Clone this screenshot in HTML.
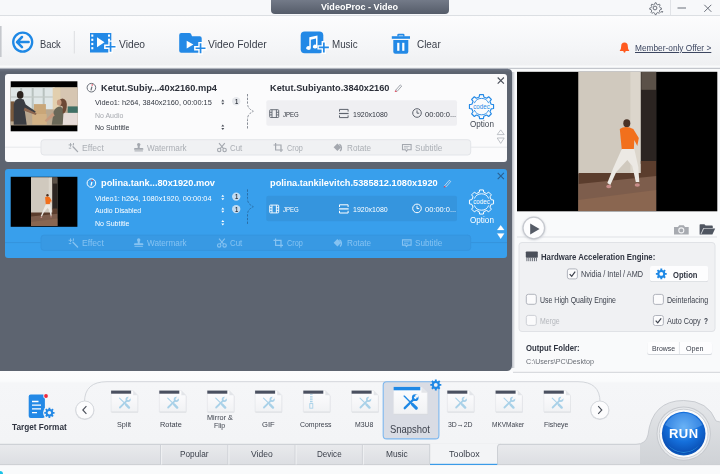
<!DOCTYPE html>
<html><head><meta charset="utf-8">
<style>
*{box-sizing:border-box;margin:0;padding:0}
html,body{width:720px;height:474px;overflow:hidden}
body{font-family:"Liberation Sans",sans-serif;background:#f4f5f7;position:relative;color:#333}
.a{position:absolute}
.t{position:absolute;white-space:nowrap;transform-origin:0 0;line-height:1}
svg{position:absolute;overflow:visible}
#titlebar{left:0;top:0;width:720px;height:16px;background:#f7f8fa;border-bottom:1px solid #dcdfe3}
#titletab{left:271px;top:0;width:178px;height:13.5px;background:linear-gradient(#737a88,#555c69);border-radius:0 0 4px 4px}
#toolbar{left:0;top:16px;width:720px;height:53px;background:linear-gradient(#fcfcfd 0px,#f5f6f8 30px,#eff0f2 49px,#f9fafb 50px,#f9fafb 51.3px,#cfd2d7 52px,#8e94a0 53px)}
#leftpanel{left:0;top:68.8px;width:512px;height:302.2px;background:linear-gradient(#6d7483 0px,#5d6470 3px);border-radius:0 4px 5px 0}
.card{left:5px;width:502px;border-radius:3px}
#card1{top:73.6px;height:88.6px;background:#fbfbfc}
#card2{top:169.2px;height:88.4px;background:#389fec}
#rightpanel{left:508px;top:67.5px;width:212px;height:304.5px;background:#f9fafb;border-top:1.3px solid #c3c6cc}
#bottom{left:0;top:371px;width:720px;height:103px;background:linear-gradient(#fcfcfd 0px,#fafbfc 10px,#f5f6f8 12px,#f3f4f6 70px)}
</style></head><body>
<div id="titlebar" class="a"></div>
<div id="titletab" class="a"></div>
<div id="toolbar" class="a"></div>
<div id="rightpanel" class="a"></div>
<div id="leftpanel" class="a"></div>
<div id="card1" class="a card"></div>
<div id="card2" class="a card"></div>
<div id="bottom" class="a"></div>
<svg class="a" style="left:0;top:0" width="720" height="474" viewBox="0 0 720 474">
<defs>
<filter id="b1" x="-20%" y="-20%" width="140%" height="140%"><feGaussianBlur stdDeviation="0.6"/></filter>
<filter id="b2" x="-20%" y="-20%" width="140%" height="140%"><feGaussianBlur stdDeviation="1.2"/></filter>
<filter id="sh" x="-30%" y="-30%" width="160%" height="160%"><feGaussianBlur stdDeviation="1"/></filter>
<!-- dancer scene 78x139 -->
<symbol id="dancer" viewBox="0 0 78 139" preserveAspectRatio="none">
 <rect width="78" height="139" fill="#cdc5b9"/>
 <rect x="0" y="0" width="52" height="102" fill="#d0c9be"/>
 <rect x="52" y="0" width="10.5" height="102" fill="#dcd6cc"/>
 <rect x="62.5" y="0" width="15.5" height="92" fill="#2b2421"/>
 <rect x="63" y="0" width="15" height="18" fill="#5b5148"/>
 <path d="M0 101 L62.5 101 L62.5 89 L78 89 L78 139 L0 139Z" fill="#5b3d2d"/>
 <path d="M0 112 L78 104 L78 139 L0 139Z" fill="#7d5d4c"/>
 <path d="M0 128 L78 118 L78 139 L0 139Z" fill="#8a6650"/>
 <g filter="url(#b1)">
 <ellipse cx="48.5" cy="51.5" rx="3.5" ry="4" fill="#4a3226"/>
 <path d="M41.5 57 Q47 53 55 57 L60.5 66 L59 74 L56 68 L55.5 78 L43.5 78 Z" fill="#f2701f"/>
 <path d="M43.5 77 L56 77 L60 95 L61 110 L57.5 110 L54 94 L49 88 L38 100 L32 113 L29 111 L35 96 Z" fill="#ece9e4"/>
 <ellipse cx="30.5" cy="114.5" rx="2.6" ry="1.8" fill="#c98d8a"/>
 <ellipse cx="59" cy="113" rx="2.6" ry="1.8" fill="#c98d8a"/>
 </g>
</symbol>
</defs>

<!-- title bar icons -->
<g stroke="#6b707a" fill="none" stroke-width="1">
 <line x1="670.5" y1="0" x2="670.5" y2="15" stroke="#e1e3e7"/>
 <line x1="677.5" y1="8" x2="686" y2="8"/>
 <path d="M704.3 4.8 L711.3 11.8 M711.3 4.8 L704.3 11.8"/>
 <circle cx="655" cy="8" r="1.9"/>
 <path d="M655 2.8 l1.2 0 l.4 1.5 l1.3 .6 l1.4-.8 l.9 .9 l-.8 1.4 l.6 1.3 l1.5 .4 l0 1.2 l-1.5 .4 l-.6 1.3 l.8 1.4 l-.9 .9 l-1.4-.8 l-1.3 .6 l-.4 1.5 l-1.2 0 l-.4-1.5 l-1.3-.6 l-1.4 .8 l-.9-.9 l.8-1.4 l-.6-1.3 l-1.5-.4 l0-1.2 l1.5-.4 l.6-1.3 l-.8-1.4 l.9-.9 l1.4 .8 l1.3-.6 z" stroke-width="0.9"/>
</g>
<path d="M660.8 11.3 l2.6 0 l-1.3 1.6z" fill="#555a64"/>

<!-- toolbar -->
<rect x="0" y="26" width="1.6" height="31" fill="#c5c8cd"/>
<line x1="74.3" y1="31" x2="74.3" y2="53.5" stroke="#dcdee2" stroke-width="1"/>
<g id="back">
 <circle cx="22.7" cy="42.1" r="9.5" fill="none" stroke="#1e88e5" stroke-width="2.3"/>
 <path d="M17.2 42.1 H28.6 M22 37 L17 42.1 L22 47.2" fill="none" stroke="#1e88e5" stroke-width="2.5" stroke-linecap="round" stroke-linejoin="round"/>
</g>
<g id="ivideo">
 <rect x="90" y="33" width="21.3" height="19.5" fill="#2389e6"/>
 <g fill="#fff">
  <rect x="91.3" y="34.5" width="2" height="2.2"/><rect x="91.3" y="38.7" width="2" height="2.2"/><rect x="91.3" y="42.9" width="2" height="2.2"/><rect x="91.3" y="47.1" width="2" height="2.2"/>
  <rect x="108" y="34.5" width="2" height="2.2"/><rect x="108" y="38.7" width="2" height="2.2"/>
  <path d="M97 37.3 L104.5 42.3 L97 47.3Z"/>
  <path d="M108.3 40.5 h4.4 v4 h4 v4.4 h-4 v4.3 h-4.4 v-4.3 h-4.2 v-4.4 h4.2z"/>
 </g>
 <path d="M109.7 41.8 h1.7 v4.1 h4.1 v1.7 h-4.1 v4.1 h-1.7 v-4.1 h-4.1 v-1.7 h4.1z" fill="#2389e6"/>
</g>
<g id="ifolder">
 <path d="M179.2 35 q0-2 2-2 h8 q1.5 0 2 1.2 l.8 2 h7.7 q2 0 2 2 v12.6 q0 2-2 2 h-18.5 q-2 0-2-2z" fill="#2389e6"/>
 <g fill="#fff">
  <path d="M186.7 40.8 L193.4 44.6 L186.7 48.4Z"/>
  <path d="M198.3 42 h4.4 v4 h4 v4.4 h-4 v4.3 h-4.4 v-4.3 h-4.2 v-4.4 h4.2z"/>
 </g>
 <path d="M199.7 43.3 h1.7 v4.1 h4.1 v1.7 h-4.1 v4.1 h-1.7 v-4.1 h-4.1 v-1.7 h4.1z" fill="#2389e6"/>
</g>
<g id="imusic">
 <rect x="300.7" y="31.6" width="22.6" height="21.7" rx="4" fill="#2389e6"/>
 <g fill="#fff">
  <path d="M309.3 37.2 L317.5 35.5 V46.6 a2.3 1.9 0 1 1 -1.5 -1.8 V38.6 L310.8 39.7 V48 a2.3 1.9 0 1 1 -1.5 -1.8 Z"/>
  <path d="M321.6 41 h4.4 v4.2 h4.2 v4.4 h-4.2 v4.3 h-4.4 v-4.3 h-4.2 v-4.4 h4.2z"/>
 </g>
 <path d="M323 42.4 h1.7 v4.2 h4.2 v1.7 h-4.2 v4.2 h-1.7 v-4.2 h-4.2 v-1.7 h4.2z" fill="#2389e6"/>
</g>
<g id="itrash" fill="#2389e6">
 <path d="M391.8 36.2 h18.2 v2.6 h-18.2z"/>
 <path d="M397.3 36.5 v-1.4 q0-1.3 1.3-1.3 h4.6 q1.3 0 1.3 1.3 v1.4 h-1.4 v-1 h-4.4 v1z"/>
 <path d="M393.3 40 h15 v11.8 q0 2-2 2 h-11 q-2 0-2-2z"/>
 <rect x="397.2" y="42.8" width="2.2" height="8" fill="#fff"/>
 <rect x="402.2" y="42.8" width="2.2" height="8" fill="#fff"/>
</g>
<g id="bell" fill="#ff5a1f">
 <path d="M624.5 42.6 q3.3 0 3.3 3.6 q0 3 1.4 4.2 v.6 h-9.4 v-.6 q1.4-1.2 1.4-4.2 q0-3.6 3.3-3.6z"/>
 <circle cx="624.5" cy="51.6" r="1.1"/>
</g>
<g transform="translate(0,0)"><line x1="5" y1="147.2" x2="507" y2="147.2" stroke="#e6e8eb" stroke-width="1"/><rect x="41" y="139.7" width="429.7" height="15.3" rx="3" fill="#f0f1f3" stroke="#e3e5e9" stroke-width="1"/><rect x="266.3" y="100.3" width="190.7" height="25.5" rx="2" fill="#efeff2"/><circle cx="91.4" cy="87.7" r="4.3" fill="none" stroke="#6a6f78" stroke-width="1"/><path d="M91.9 86.6 L91 90.3" stroke="#6a6f78" stroke-width="1.2" fill="none"/><circle cx="92.2" cy="85.1" r="0.75" fill="#e0354a"/><path d="M221.3 101.39999999999999 l1.5 -2 l1.5 2z M221.3 102.8 l1.5 2 l1.5 -2z" fill="#4a4f59"/><path d="M221.3 126.6 l1.5 -2 l1.5 2z M221.3 128.0 l1.5 2 l1.5 -2z" fill="#4a4f59"/><circle cx="236.2" cy="101.2" r="4.2" fill="#e6e8ec"/><path d="M247.5 94 V103 Q247.5 107.5 250.5 109.5 L253.3 111.3 L250.5 113.1 Q247.5 115.1 247.5 119.6 V128.5" fill="none" stroke="#8a8f98" stroke-width="1" stroke-dasharray="2.4 1.3"/><g fill="none" stroke="#5f646e" stroke-width="0.9"><rect x="269.7" y="109.7" width="9" height="7.8" rx="0.8"/><path d="M272 109.7 v7.8 M276.4 109.7 v7.8 M269.7 112.3 h2.3 M269.7 114.9 h2.3 M276.4 112.3 h2.3 M276.4 114.9 h2.3"/></g><g fill="none" stroke="#5f646e" stroke-width="1"><path d="M339.5 111.6 v-2.2 h8.6 v2.2 M339.5 115.4 v2.2 h8.6 v-2.2"/><path d="M339 113.5 h9.6" stroke-width="1.2"/></g><g fill="none" stroke="#5f646e" stroke-width="1"><circle cx="417" cy="113" r="4.3"/><path d="M417 110.4 V113.2 H419.2"/></g><g transform="translate(394,84)"><path d="M1.6 6.3 L6.3 0.9 L7.7 2.1 L3 7.5 Z" fill="none" stroke="#8a8f98" stroke-width="0.8"/><path d="M0.6 8 L1.6 6.3 L3 7.5 Z" fill="#e0354a"/></g><path d="M497.7 77.5 L503.9 83.7 M503.9 77.5 L497.7 83.7" stroke="#4a4f59" stroke-width="1.1" fill="none"/><path d="M497.2 134.6 L500.7 129.9 L504.2 134.6 Z" fill="none" stroke="#b0b4ba" stroke-width="0.8"/><path d="M497.2 138 L500.7 143.4 L504.2 138 Z" fill="none" stroke="#b0b4ba" stroke-width="0.8"/><path d="M479.59 94.55 L483.41 94.55 L483.81 96.97 L486.67 98.16 L488.67 96.73 L491.37 99.43 L489.94 101.43 L491.13 104.29 L493.55 104.69 L493.55 108.51 L491.13 108.91 L489.94 111.77 L491.37 113.77 L488.67 116.47 L486.67 115.04 L483.81 116.23 L483.41 118.65 L479.59 118.65 L479.19 116.23 L476.33 115.04 L474.33 116.47 L471.63 113.77 L473.06 111.77 L471.87 108.91 L469.45 108.51 L469.45 104.69 L471.87 104.29 L473.06 101.43 L471.63 99.43 L474.33 96.73 L476.33 98.16 L479.19 96.97Z" fill="none" stroke="#2389e6" stroke-width="1.15" stroke-linejoin="round"/><path d="M474.3 103.2 A7.8 7.8 0 0 1 488.7 103.2 M488.7 110 A7.8 7.8 0 0 1 474.3 110" fill="none" stroke="#2389e6" stroke-width="0.9"/><text x="481.5" y="109" font-family="Liberation Sans, sans-serif" font-size="7" fill="#2389e6" text-anchor="middle" textLength="16.5" lengthAdjust="spacingAndGlyphs">codec</text><g fill="none" stroke="#a4a8af" stroke-width="1.3" stroke-linecap="round"><path d="M73 146.8 L77.6 151.6"/><path d="M70.5 143.4 v3 M69 144.9 h3 M73.5 143.4 v1.6 M69.2 148.2 h1.6" stroke-width="0.9"/></g><g fill="#a4a8af"><circle cx="138.7" cy="144.6" r="1.7"/><path d="M137.7 145.5 h2 v2.4 h2.8 q.8 0 .8 .8 v1 h-9.2 v-1 q0-.8 .8-.8 h2.8z"/><rect x="134.5" y="150.4" width="8.4" height="1"/></g><g fill="none" stroke="#a4a8af" stroke-width="1.1"><circle cx="219.2" cy="150" r="1.7"/><circle cx="224.6" cy="150" r="1.7"/><path d="M220.2 148.6 L224.8 143.2 M223.6 148.6 L219 143.2"/></g><g fill="none" stroke="#a4a8af" stroke-width="1.2"><path d="M275.6 143 V150 H283 M273.5 145 H281 V152"/></g><g fill="#a4a8af"><path d="M333.6 147.3 L337.4 143.5 L341.2 147.3 L337.4 151.1Z"/><path d="M339.8 143.8 A5 5 0 0 1 340.6 151.6 L339.6 150.7 A3.8 3.8 0 0 0 339 144.8Z"/></g><g fill="none" stroke="#a4a8af" stroke-width="1.1"><path d="M402.5 144.5 h8.6 v5.2 h-3.6 l-1 1.5 l-1-1.5 h-3z"/><path d="M404 146.4 h5.6 M404 148 h4" stroke-width="0.7"/></g></g><g transform="translate(0,95.4)"><line x1="5" y1="147.2" x2="507" y2="147.2" stroke="#3493dc" stroke-width="1"/><rect x="41" y="139.7" width="429.7" height="15.3" rx="3" fill="#3899e3" stroke="#3594de" stroke-width="1"/><rect x="266.3" y="100.3" width="190.7" height="25.5" rx="2" fill="#3595de"/><circle cx="91.4" cy="87.7" r="4.3" fill="none" stroke="#ffffff" stroke-width="1"/><path d="M91.9 86.6 L91 90.3" stroke="#ffffff" stroke-width="1.2" fill="none"/><circle cx="92.2" cy="85.1" r="0.75" fill="#e0354a"/><path d="M221.3 101.39999999999999 l1.5 -2 l1.5 2z M221.3 102.8 l1.5 2 l1.5 -2z" fill="#ffffff"/><path d="M221.3 126.6 l1.5 -2 l1.5 2z M221.3 128.0 l1.5 2 l1.5 -2z" fill="#ffffff"/><path d="M221.3 114.0 l1.5 -2 l1.5 2z M221.3 115.4 l1.5 2 l1.5 -2z" fill="#ffffff"/><circle cx="236.2" cy="101.2" r="4.2" fill="#c3dcf1"/><circle cx="236.2" cy="113.7" r="4.2" fill="#c3dcf1"/><path d="M247.5 94 V103 Q247.5 107.5 250.5 109.5 L253.3 111.3 L250.5 113.1 Q247.5 115.1 247.5 119.6 V128.5" fill="none" stroke="#2a6fa8" stroke-width="1" stroke-dasharray="2.4 1.3"/><g fill="none" stroke="#ffffff" stroke-width="0.9"><rect x="269.7" y="109.7" width="9" height="7.8" rx="0.8"/><path d="M272 109.7 v7.8 M276.4 109.7 v7.8 M269.7 112.3 h2.3 M269.7 114.9 h2.3 M276.4 112.3 h2.3 M276.4 114.9 h2.3"/></g><g fill="none" stroke="#ffffff" stroke-width="1"><path d="M339.5 111.6 v-2.2 h8.6 v2.2 M339.5 115.4 v2.2 h8.6 v-2.2"/><path d="M339 113.5 h9.6" stroke-width="1.2"/></g><g fill="none" stroke="#ffffff" stroke-width="1"><circle cx="417" cy="113" r="4.3"/><path d="M417 110.4 V113.2 H419.2"/></g><g transform="translate(443,84)"><path d="M1.6 6.3 L6.3 0.9 L7.7 2.1 L3 7.5 Z" fill="none" stroke="#d0e4f5" stroke-width="0.8"/><path d="M0.6 8 L1.6 6.3 L3 7.5 Z" fill="#e0354a"/></g><path d="M497.7 77.5 L503.9 83.7 M503.9 77.5 L497.7 83.7" stroke="#2a5f8f" stroke-width="1.1" fill="none"/><path d="M497.2 134.6 L500.7 129.9 L504.2 134.6 Z" fill="#ffffff" stroke="#ffffff" stroke-width="0.2"/><path d="M497.2 138 L500.7 143.4 L504.2 138 Z" fill="#ffffff" stroke="#ffffff" stroke-width="0.2"/><path d="M479.59 94.55 L483.41 94.55 L483.81 96.97 L486.67 98.16 L488.67 96.73 L491.37 99.43 L489.94 101.43 L491.13 104.29 L493.55 104.69 L493.55 108.51 L491.13 108.91 L489.94 111.77 L491.37 113.77 L488.67 116.47 L486.67 115.04 L483.81 116.23 L483.41 118.65 L479.59 118.65 L479.19 116.23 L476.33 115.04 L474.33 116.47 L471.63 113.77 L473.06 111.77 L471.87 108.91 L469.45 108.51 L469.45 104.69 L471.87 104.29 L473.06 101.43 L471.63 99.43 L474.33 96.73 L476.33 98.16 L479.19 96.97Z" fill="none" stroke="#ffffff" stroke-width="1.0" stroke-linejoin="round"/><path d="M474.3 103.2 A7.8 7.8 0 0 1 488.7 103.2 M488.7 110 A7.8 7.8 0 0 1 474.3 110" fill="none" stroke="#ffffff" stroke-width="0.9"/><text x="481.5" y="109" font-family="Liberation Sans, sans-serif" font-size="7" fill="#ffffff" text-anchor="middle" textLength="16.5" lengthAdjust="spacingAndGlyphs">codec</text><g fill="none" stroke="#86c3f2" stroke-width="1.3" stroke-linecap="round"><path d="M73 146.8 L77.6 151.6"/><path d="M70.5 143.4 v3 M69 144.9 h3 M73.5 143.4 v1.6 M69.2 148.2 h1.6" stroke-width="0.9"/></g><g fill="#86c3f2"><circle cx="138.7" cy="144.6" r="1.7"/><path d="M137.7 145.5 h2 v2.4 h2.8 q.8 0 .8 .8 v1 h-9.2 v-1 q0-.8 .8-.8 h2.8z"/><rect x="134.5" y="150.4" width="8.4" height="1"/></g><g fill="none" stroke="#86c3f2" stroke-width="1.1"><circle cx="219.2" cy="150" r="1.7"/><circle cx="224.6" cy="150" r="1.7"/><path d="M220.2 148.6 L224.8 143.2 M223.6 148.6 L219 143.2"/></g><g fill="none" stroke="#86c3f2" stroke-width="1.2"><path d="M275.6 143 V150 H283 M273.5 145 H281 V152"/></g><g fill="#86c3f2"><path d="M333.6 147.3 L337.4 143.5 L341.2 147.3 L337.4 151.1Z"/><path d="M339.8 143.8 A5 5 0 0 1 340.6 151.6 L339.6 150.7 A3.8 3.8 0 0 0 339 144.8Z"/></g><g fill="none" stroke="#86c3f2" stroke-width="1.1"><path d="M402.5 144.5 h8.6 v5.2 h-3.6 l-1 1.5 l-1-1.5 h-3z"/><path d="M404 146.4 h5.6 M404 148 h4" stroke-width="0.7"/></g></g><rect x="10.7" y="81.3" width="66.7" height="50" fill="#000"/><svg x="10.7" y="87.4" width="66.7" height="37.3" viewBox="0 0 66.7 37.3" preserveAspectRatio="none">
<rect width="66.7" height="37.3" fill="#cbbfa9"/>
<g filter="url(#b1)">
<rect x="0" y="0" width="44" height="22" fill="#dfe6e6"/>
<rect x="9.5" y="0" width="2" height="22" fill="#b9c2bf"/><rect x="21" y="0" width="2" height="22" fill="#b9c2bf"/><rect x="32" y="0" width="2" height="22" fill="#b9c2bf"/>
<rect x="0" y="9" width="44" height="1.2" fill="#c2c9c6"/>
<rect x="42" y="0" width="8" height="26" fill="#e2cfae"/>
<rect x="50" y="0" width="17" height="20" fill="#d6c6b2"/>
<rect x="0" y="22" width="67" height="16" fill="#b9a78f"/>
<rect x="57" y="19" width="10" height="6.5" fill="#3f6f66"/>
<rect x="51" y="25.5" width="16" height="12" fill="#e6dcd8"/>
<rect x="23.2" y="16.7" width="12" height="10" fill="#c9a678"/>
<rect x="21.5" y="26.6" width="14.5" height="10.7" fill="#d2b185"/>
<rect x="0" y="14" width="4" height="20" fill="#7a5a3c"/>
<path d="M3 37.3 L3 17 Q4 11 9 11 L13 12 L15 17 L25 24 L24 26 L14 23 L16 37.3Z" fill="#3b3d42"/>
<ellipse cx="9.5" cy="7.5" rx="3.3" ry="3.8" fill="#2a221f"/>
<path d="M14 20 L26 26 L25 27.5 L13 23Z" fill="#8c6650"/>
<path d="M41 37.3 L43 24 Q45 19 50 19 L53 22 L52 37.3Z" fill="#6b6758"/>
<path d="M47 17 Q48 11 52 11 Q57 12 56 20 Q55 26 52 26 L52 19 Z" fill="#6d4a35"/>
<ellipse cx="48.5" cy="15" rx="2.3" ry="3" fill="#c79a7e"/>
<path d="M42 25 L34 33 L35.5 34.5 L44 28Z" fill="#c79a7e"/>
</g></svg><rect x="10.7" y="176.8" width="66.7" height="50" fill="#000"/><use href="#dancer" x="31" y="177.3" width="26.5" height="48.6"/>
<defs><linearGradient id="lsh" x1="0" y1="0" x2="1" y2="0"><stop offset="0" stop-color="#b9bdc5"/><stop offset="1" stop-color="#f9fafb"/></linearGradient></defs><rect x="512" y="72" width="3.2" height="296" fill="url(#lsh)"/><rect x="517" y="71.8" width="200.3" height="139.5" fill="#000"/><use href="#dancer" x="578.3" y="71.8" width="78" height="139.2"/><line x1="517" y1="237" x2="717" y2="237" stroke="#dfe1e5" stroke-width="1"/><circle cx="533.8" cy="228.6" r="11.6" fill="#c9ccd2" filter="url(#sh)" opacity="0.8"/><circle cx="533.8" cy="228" r="10.8" fill="#fdfdfe" stroke="#c6c9cf" stroke-width="1.3"/><path d="M530.2 223.4 L539.6 228.9 L530.2 234.4Z" fill="#555b66"/><g fill="#a7aab0"><path d="M674 227 h4 l1.2-1.8 h4.6 l1.2 1.8 h3.7 v7.4 h-14.7z"/></g><circle cx="681.3" cy="230.4" r="2.5" fill="none" stroke="#f1f2f4" stroke-width="1.1"/><g><path d="M699.6 234.4 v-9.4 q0-.8 .8-.8 h4 l1.2 1.4 h6.4 q.8 0 .8 .8 v1.6 h-9.4 l-2.6 6.4z" fill="#4f5560"/><path d="M700.6 234.6 l2.8-6.2 h11.8 l-2.8 6.2z" fill="#4f5560"/><path d="M701 234 l2.6-5.4" stroke="#f1f2f4" stroke-width="0.7"/></g><rect x="519" y="242.5" width="196" height="89" rx="3" fill="#f0f1f3" stroke="#e0e2e6" stroke-width="1"/><g fill="#4a4f59"><rect x="525.8" y="251.4" width="12" height="6.4" rx="0.8"/><rect x="526.4" y="257.8" width="1" height="3.4" fill="#6a6f78"/><rect x="528.3" y="257.8" width="1" height="3.4" fill="#6a6f78"/><rect x="530.2" y="257.8" width="1" height="3.4" fill="#6a6f78"/><rect x="532.1" y="257.8" width="1" height="3.4" fill="#6a6f78"/><rect x="534.0" y="257.8" width="1" height="3.4" fill="#6a6f78"/><rect x="535.9" y="257.8" width="1" height="3.4" fill="#6a6f78"/></g><rect x="567.4" y="268.9" width="10" height="10" rx="2" fill="#fbfbfc" stroke="#a9adb5" stroke-width="0.9"/><path d="M569.6999999999999 274.09999999999997 L571.6999999999999 276.29999999999995 L575.1999999999999 271.7" fill="none" stroke="#3a3f4a" stroke-width="1.2"/><rect x="526.3" y="294.3" width="10" height="10" rx="2" fill="#fbfbfc" stroke="#a9adb5" stroke-width="0.9"/><rect x="653.4" y="294.4" width="10" height="10" rx="2" fill="#fbfbfc" stroke="#a9adb5" stroke-width="0.9"/><rect x="526.3" y="315.4" width="10" height="10" rx="2" fill="#fbfbfc" stroke="#c9ccd1" stroke-width="0.9"/><rect x="653.4" y="315.5" width="10" height="10" rx="2" fill="#fbfbfc" stroke="#a9adb5" stroke-width="0.9"/><path d="M655.6999999999999 320.7 L657.6999999999999 322.9 L661.1999999999999 318.3" fill="none" stroke="#3a3f4a" stroke-width="1.2"/><rect x="650" y="266.8" width="58.2" height="15.2" rx="2" fill="#d5d8dd" filter="url(#b1)"/><rect x="650" y="266" width="58.2" height="15.2" rx="2" fill="#fdfdfe"/><path d="M660.35 268.48 L662.25 268.48 L662.26 269.91 L663.44 270.40 L664.46 269.40 L665.80 270.74 L664.80 271.76 L665.29 272.94 L666.72 272.95 L666.72 274.85 L665.29 274.86 L664.80 276.04 L665.80 277.06 L664.46 278.40 L663.44 277.40 L662.26 277.89 L662.25 279.32 L660.35 279.32 L660.34 277.89 L659.16 277.40 L658.14 278.40 L656.80 277.06 L657.80 276.04 L657.31 274.86 L655.88 274.85 L655.88 272.95 L657.31 272.94 L657.80 271.76 L656.80 270.74 L658.14 269.40 L659.16 270.40 L660.34 269.91Z" fill="#1e88e5"/><circle cx="661.3" cy="273.9" r="1.9" fill="#fdfdfe"/><rect x="647.2" y="342.8" width="64.9" height="12.2" rx="2" fill="#d5d8dd" filter="url(#b1)"/><rect x="647.2" y="341.9" width="64.9" height="12.2" rx="2" fill="#fdfdfe"/><line x1="679.4" y1="342" x2="679.4" y2="354" stroke="#e4e6ea" stroke-width="1"/>
<rect x="512" y="371" width="208" height="1" fill="#fafbfc"/><rect x="513" y="371.8" width="207" height="1" fill="#d0d3d8"/><defs><linearGradient id="tbg" x1="0" y1="0" x2="0" y2="1"><stop offset="0" stop-color="#e9eaed"/><stop offset="1" stop-color="#dcdee2"/></linearGradient><linearGradient id="sock" x1="0" y1="0" x2="0" y2="1"><stop offset="0" stop-color="#e4e6e9"/><stop offset="1" stop-color="#cfd2d6"/></linearGradient><radialGradient id="run" cx="0.5" cy="0.35" r="0.75"><stop offset="0" stop-color="#55a8f4"/><stop offset="0.45" stop-color="#1570dc"/><stop offset="0.8" stop-color="#0a4fb4"/><stop offset="1" stop-color="#1a8fe0"/></radialGradient><linearGradient id="pg" x1="0" y1="0" x2="0" y2="1"><stop offset="0" stop-color="#fdfdfe"/><stop offset="1" stop-color="#f1f2f4"/></linearGradient></defs><path d="M0 444.3 H497.5 V444.3 H636 Q646 444.3 648 435 Q652 400.5 683.7 400.5 Q708 400.5 716 421 L720 422 V464.8 H0Z" fill="url(#sock)"/><rect x="0" y="444.3" width="640" height="20.5" fill="url(#tbg)"/><path d="M0 444.3 H636 Q646 444.3 648 435 Q652 400.5 683.7 400.5 Q708 400.5 716 421 L720 422" fill="none" stroke="#c9ccd1" stroke-width="1"/><path d="M0 464.8 H720" fill="none" stroke="#c9ccd1" stroke-width="1"/><rect x="0" y="465.3" width="720" height="9" fill="#f9fafb"/><line x1="160.6" y1="445" x2="160.6" y2="464.5" stroke="#cdd0d5" stroke-width="1"/><line x1="161.6" y1="445" x2="161.6" y2="464.5" stroke="#f0f1f3" stroke-width="1"/><line x1="227.9" y1="445" x2="227.9" y2="464.5" stroke="#cdd0d5" stroke-width="1"/><line x1="228.9" y1="445" x2="228.9" y2="464.5" stroke="#f0f1f3" stroke-width="1"/><line x1="295.1" y1="445" x2="295.1" y2="464.5" stroke="#cdd0d5" stroke-width="1"/><line x1="296.1" y1="445" x2="296.1" y2="464.5" stroke="#f0f1f3" stroke-width="1"/><line x1="362.4" y1="445" x2="362.4" y2="464.5" stroke="#cdd0d5" stroke-width="1"/><line x1="363.4" y1="445" x2="363.4" y2="464.5" stroke="#f0f1f3" stroke-width="1"/><path d="M429.7 443.5 V464.5 H497.5 V447 Q497.5 443.8 500.5 443.8 L497.5 443.5Z" fill="#f3f4f6"/><path d="M429.7 444 V464.5 M497.5 464.5 V447 Q497.5 444.3 500.5 444.3" fill="none" stroke="#cdd0d5" stroke-width="1"/><rect x="430" y="463.8" width="67.3" height="1.2" fill="#3a9be8"/><path d="M84.5 402 Q84.5 381.7 107 381.7 H578 Q600 381.7 600 402 V420" fill="none" stroke="#d3d6db" stroke-width="1"/><circle cx="84.8" cy="410.4" r="9.6" fill="#d9dbdf" filter="url(#b1)"/><circle cx="84.8" cy="410" r="9" fill="#fcfcfd" stroke="#d2d5da" stroke-width="0.8"/><path d="M86.39999999999999 406.2 L82.8 410 L86.39999999999999 413.8" fill="none" stroke="#4a4f59" stroke-width="1.1"/><circle cx="599.8" cy="410.4" r="9.6" fill="#d9dbdf" filter="url(#b1)"/><circle cx="599.8" cy="410" r="9" fill="#fcfcfd" stroke="#d2d5da" stroke-width="0.8"/><path d="M598.1999999999999 406.2 L601.8 410 L598.1999999999999 413.8" fill="none" stroke="#4a4f59" stroke-width="1.1"/><path d="M28.7 396.4 q0-2 2-2 h12.2 q2 0 2 2 v19.5 q0 2-2 2 h-12.2 q-2 0-2-2z" fill="#2389e6"/><g stroke="#fff" stroke-width="1.3"><path d="M32 401.5 h6.5 M32 405.2 h9 M32 408.9 h9 M32 412.6 h5"/></g><circle cx="46" cy="396" r="2.7" fill="#f3f4f6"/><circle cx="46" cy="396" r="1.9" fill="#f0283c"/><circle cx="49.4" cy="412.8" r="6.3" fill="#f3f4f6"/><path d="M48.51 407.68 L50.29 407.68 L50.31 409.01 L51.44 409.47 L52.39 408.55 L53.65 409.81 L52.73 410.76 L53.19 411.89 L54.52 411.91 L54.52 413.69 L53.19 413.71 L52.73 414.84 L53.65 415.79 L52.39 417.05 L51.44 416.13 L50.31 416.59 L50.29 417.92 L48.51 417.92 L48.49 416.59 L47.36 416.13 L46.41 417.05 L45.15 415.79 L46.07 414.84 L45.61 413.71 L44.28 413.69 L44.28 411.91 L45.61 411.89 L46.07 410.76 L45.15 409.81 L46.41 408.55 L47.36 409.47 L48.49 409.01Z" fill="#2389e6"/><circle cx="49.4" cy="412.8" r="1.8" fill="#f3f4f6"/><path d="M111.1 391.1 H133.158 L137.79999999999998 395.242 V411.70000000000005 H111.1Z" fill="#d4d7dc" filter="url(#b1)" transform="translate(0.3,0.8)"/><path d="M111.1 390.6 H133.158 L137.79999999999998 395.242 V411.70000000000005 H111.1Z" fill="url(#pg)" stroke="#e2e4e8" stroke-width="0.6"/><path d="M133.158 390.6 V395.242 H137.79999999999998Z" fill="#e3e5e9"/><rect x="111.1" y="390.6" width="20" height="3.1" fill="#4a5060"/><g stroke="#a9d1e8" stroke-linecap="round" fill="none"><path d="M119.93999999999998 407.51000000000005 L126.90999999999998 400.5400000000001" stroke-width="1.8039999999999998"/><circle cx="128.14" cy="399.31000000000006" r="1.8039999999999998" stroke-width="1.64"/><path d="M119.52999999999999 398.08000000000004 L125.67999999999999 404.2300000000001" stroke-width="1.0659999999999998"/><path d="M126.08999999999999 404.64000000000004 L128.95999999999998 407.51000000000005" stroke-width="2.4599999999999995"/></g><circle cx="129.36999999999998" cy="398.08000000000004" r="1.3119999999999998" fill="#f7f8f9"/><path d="M159.3 391.1 H181.358 L186.0 395.242 V411.70000000000005 H159.3Z" fill="#d4d7dc" filter="url(#b1)" transform="translate(0.3,0.8)"/><path d="M159.3 390.6 H181.358 L186.0 395.242 V411.70000000000005 H159.3Z" fill="url(#pg)" stroke="#e2e4e8" stroke-width="0.6"/><path d="M181.358 390.6 V395.242 H186.0Z" fill="#e3e5e9"/><rect x="159.3" y="390.6" width="20" height="3.1" fill="#4a5060"/><g stroke="#a9d1e8" stroke-linecap="round" fill="none"><path d="M168.14000000000001 407.51000000000005 L175.11 400.5400000000001" stroke-width="1.8039999999999998"/><circle cx="176.34" cy="399.31000000000006" r="1.8039999999999998" stroke-width="1.64"/><path d="M167.73000000000002 398.08000000000004 L173.88 404.2300000000001" stroke-width="1.0659999999999998"/><path d="M174.29 404.64000000000004 L177.16 407.51000000000005" stroke-width="2.4599999999999995"/></g><circle cx="177.57" cy="398.08000000000004" r="1.3119999999999998" fill="#f7f8f9"/><path d="M207.3 391.1 H229.358 L234.0 395.242 V411.70000000000005 H207.3Z" fill="#d4d7dc" filter="url(#b1)" transform="translate(0.3,0.8)"/><path d="M207.3 390.6 H229.358 L234.0 395.242 V411.70000000000005 H207.3Z" fill="url(#pg)" stroke="#e2e4e8" stroke-width="0.6"/><path d="M229.358 390.6 V395.242 H234.0Z" fill="#e3e5e9"/><rect x="207.3" y="390.6" width="20" height="3.1" fill="#4a5060"/><g stroke="#a9d1e8" stroke-linecap="round" fill="none"><path d="M216.14000000000001 407.51000000000005 L223.11 400.5400000000001" stroke-width="1.8039999999999998"/><circle cx="224.34" cy="399.31000000000006" r="1.8039999999999998" stroke-width="1.64"/><path d="M215.73000000000002 398.08000000000004 L221.88 404.2300000000001" stroke-width="1.0659999999999998"/><path d="M222.29 404.64000000000004 L225.16 407.51000000000005" stroke-width="2.4599999999999995"/></g><circle cx="225.57" cy="398.08000000000004" r="1.3119999999999998" fill="#f7f8f9"/><path d="M255.1 391.1 H277.158 L281.8 395.242 V411.70000000000005 H255.1Z" fill="#d4d7dc" filter="url(#b1)" transform="translate(0.3,0.8)"/><path d="M255.1 390.6 H277.158 L281.8 395.242 V411.70000000000005 H255.1Z" fill="url(#pg)" stroke="#e2e4e8" stroke-width="0.6"/><path d="M277.158 390.6 V395.242 H281.8Z" fill="#e3e5e9"/><rect x="255.1" y="390.6" width="20" height="3.1" fill="#4a5060"/><g stroke="#a9d1e8" stroke-linecap="round" fill="none"><path d="M263.94 407.51000000000005 L270.90999999999997 400.5400000000001" stroke-width="1.8039999999999998"/><circle cx="272.14" cy="399.31000000000006" r="1.8039999999999998" stroke-width="1.64"/><path d="M263.53 398.08000000000004 L269.68 404.2300000000001" stroke-width="1.0659999999999998"/><path d="M270.09 404.64000000000004 L272.96 407.51000000000005" stroke-width="2.4599999999999995"/></g><circle cx="273.37" cy="398.08000000000004" r="1.3119999999999998" fill="#f7f8f9"/><path d="M303.3 391.1 H325.358 L330.0 395.242 V411.70000000000005 H303.3Z" fill="#d4d7dc" filter="url(#b1)" transform="translate(0.3,0.8)"/><path d="M303.3 390.6 H325.358 L330.0 395.242 V411.70000000000005 H303.3Z" fill="url(#pg)" stroke="#e2e4e8" stroke-width="0.6"/><path d="M325.358 390.6 V395.242 H330.0Z" fill="#e3e5e9"/><rect x="303.3" y="390.6" width="20" height="3.1" fill="#4a5060"/><g stroke="#a9d1e8" fill="none"><path d="M311.3 394.2 v9.2" stroke-width="2.6" stroke-dasharray="0.9 0.8"/><rect x="309.8" y="403.6" width="3" height="4.6" stroke-width="0.9"/></g><path d="M351.6 391.1 H373.658 L378.3 395.242 V411.70000000000005 H351.6Z" fill="#d4d7dc" filter="url(#b1)" transform="translate(0.3,0.8)"/><path d="M351.6 390.6 H373.658 L378.3 395.242 V411.70000000000005 H351.6Z" fill="url(#pg)" stroke="#e2e4e8" stroke-width="0.6"/><path d="M373.658 390.6 V395.242 H378.3Z" fill="#e3e5e9"/><rect x="351.6" y="390.6" width="20" height="3.1" fill="#4a5060"/><g stroke="#a9d1e8" stroke-linecap="round" fill="none"><path d="M360.44000000000005 407.51000000000005 L367.41 400.5400000000001" stroke-width="1.8039999999999998"/><circle cx="368.64000000000004" cy="399.31000000000006" r="1.8039999999999998" stroke-width="1.64"/><path d="M360.03000000000003 398.08000000000004 L366.18000000000006 404.2300000000001" stroke-width="1.0659999999999998"/><path d="M366.59000000000003 404.64000000000004 L369.46000000000004 407.51000000000005" stroke-width="2.4599999999999995"/></g><circle cx="369.87000000000006" cy="398.08000000000004" r="1.3119999999999998" fill="#f7f8f9"/><path d="M447.3 391.1 H469.358 L474.0 395.242 V411.70000000000005 H447.3Z" fill="#d4d7dc" filter="url(#b1)" transform="translate(0.3,0.8)"/><path d="M447.3 390.6 H469.358 L474.0 395.242 V411.70000000000005 H447.3Z" fill="url(#pg)" stroke="#e2e4e8" stroke-width="0.6"/><path d="M469.358 390.6 V395.242 H474.0Z" fill="#e3e5e9"/><rect x="447.3" y="390.6" width="20" height="3.1" fill="#4a5060"/><g stroke="#a9d1e8" stroke-linecap="round" fill="none"><path d="M456.14000000000004 407.51000000000005 L463.11 400.5400000000001" stroke-width="1.8039999999999998"/><circle cx="464.34000000000003" cy="399.31000000000006" r="1.8039999999999998" stroke-width="1.64"/><path d="M455.73 398.08000000000004 L461.88000000000005 404.2300000000001" stroke-width="1.0659999999999998"/><path d="M462.29 404.64000000000004 L465.16 407.51000000000005" stroke-width="2.4599999999999995"/></g><circle cx="465.57000000000005" cy="398.08000000000004" r="1.3119999999999998" fill="#f7f8f9"/><path d="M495.6 391.1 H517.658 L522.3000000000001 395.242 V411.70000000000005 H495.6Z" fill="#d4d7dc" filter="url(#b1)" transform="translate(0.3,0.8)"/><path d="M495.6 390.6 H517.658 L522.3000000000001 395.242 V411.70000000000005 H495.6Z" fill="url(#pg)" stroke="#e2e4e8" stroke-width="0.6"/><path d="M517.658 390.6 V395.242 H522.3000000000001Z" fill="#e3e5e9"/><rect x="495.6" y="390.6" width="20" height="3.1" fill="#4a5060"/><g stroke="#a9d1e8" stroke-linecap="round" fill="none"><path d="M504.44000000000005 407.51000000000005 L511.41 400.5400000000001" stroke-width="1.8039999999999998"/><circle cx="512.6400000000001" cy="399.31000000000006" r="1.8039999999999998" stroke-width="1.64"/><path d="M504.03000000000003 398.08000000000004 L510.18000000000006 404.2300000000001" stroke-width="1.0659999999999998"/><path d="M510.59000000000003 404.64000000000004 L513.46 407.51000000000005" stroke-width="2.4599999999999995"/></g><circle cx="513.87" cy="398.08000000000004" r="1.3119999999999998" fill="#f7f8f9"/><path d="M543.8 391.1 H565.858 L570.5 395.242 V411.70000000000005 H543.8Z" fill="#d4d7dc" filter="url(#b1)" transform="translate(0.3,0.8)"/><path d="M543.8 390.6 H565.858 L570.5 395.242 V411.70000000000005 H543.8Z" fill="url(#pg)" stroke="#e2e4e8" stroke-width="0.6"/><path d="M565.858 390.6 V395.242 H570.5Z" fill="#e3e5e9"/><rect x="543.8" y="390.6" width="20" height="3.1" fill="#4a5060"/><g stroke="#a9d1e8" stroke-linecap="round" fill="none"><path d="M552.64 407.51000000000005 L559.61 400.5400000000001" stroke-width="1.8039999999999998"/><circle cx="560.84" cy="399.31000000000006" r="1.8039999999999998" stroke-width="1.64"/><path d="M552.23 398.08000000000004 L558.38 404.2300000000001" stroke-width="1.0659999999999998"/><path d="M558.79 404.64000000000004 L561.66 407.51000000000005" stroke-width="2.4599999999999995"/></g><circle cx="562.0699999999999" cy="398.08000000000004" r="1.3119999999999998" fill="#f7f8f9"/><rect x="383.2" y="381.8" width="55.7" height="57.1" rx="3.5" fill="#d9dce4" stroke="#7db7ee" stroke-width="1.1"/><path d="M393.6 387.4 H421.46000000000004 L427.40000000000003 392.84 V413.9 H393.6Z" fill="#d4d7dc" filter="url(#b1)" transform="translate(0.3,0.8)"/><path d="M393.6 386.9 H421.46000000000004 L427.40000000000003 392.84 V413.9 H393.6Z" fill="url(#pg)" stroke="#e2e4e8" stroke-width="0.6"/><path d="M421.46000000000004 386.9 V392.84 H427.40000000000003Z" fill="#e3e5e9"/><rect x="393.6" y="386.9" width="26.7" height="3.4" fill="#1e88e5"/><g stroke="#1e88e5" stroke-linecap="round" fill="none"><path d="M404.725 408.17499999999995 L413.65 399.25" stroke-width="2.31"/><circle cx="415.225" cy="397.67499999999995" r="2.31" stroke-width="2.1"/><path d="M404.2 396.09999999999997 L412.075 403.97499999999997" stroke-width="1.365"/><path d="M412.6 404.5 L416.275 408.17499999999995" stroke-width="3.15"/></g><circle cx="416.8" cy="396.09999999999997" r="1.68" fill="#f7f8f9"/><path d="M434.84 379.38 L436.76 379.38 L436.76 380.91 L437.94 381.40 L439.02 380.32 L440.38 381.68 L439.30 382.76 L439.79 383.94 L441.32 383.94 L441.32 385.86 L439.79 385.86 L439.30 387.04 L440.38 388.12 L439.02 389.48 L437.94 388.40 L436.76 388.89 L436.76 390.42 L434.84 390.42 L434.84 388.89 L433.66 388.40 L432.58 389.48 L431.22 388.12 L432.30 387.04 L431.81 385.86 L430.28 385.86 L430.28 383.94 L431.81 383.94 L432.30 382.76 L431.22 381.68 L432.58 380.32 L433.66 381.40 L434.84 380.91Z" fill="#1e88e5"/><circle cx="435.8" cy="384.9" r="1.9" fill="#eef0f3"/><circle cx="683.7" cy="433.6" r="27.2" fill="#c6c9ce"/><circle cx="683.7" cy="433.6" r="26.2" fill="#e8eaed"/><circle cx="683.7" cy="433.6" r="24.4" fill="#fbfbfc" stroke="#c3c6cc" stroke-width="0.8"/><circle cx="683.7" cy="433.6" r="21.8" fill="url(#run)"/><path d="M665 425 A20.5 20.5 0 0 1 702.4 425 Q683.7 436 665 425Z" fill="#8fc7fa" opacity="0.35"/><path d="M668 445 A21 21 0 0 0 699.4 445 A19 17 0 0 1 668 445Z" fill="#4fd8ff" opacity="0.8"/><circle cx="0" cy="474" r="3" fill="#19c2e6"/>
</svg>

<span class="t" style="left:321.0px;top:2.7px;font-size:9px;color:#fff;font-weight:bold;transform:scaleX(1.004);">VideoProc - Video</span>
<span class="t" style="left:39.5px;top:38.6px;font-size:11.2px;color:#3b404b;transform:scaleX(0.836);">Back</span>
<span class="t" style="left:119.2px;top:38.6px;font-size:11.2px;color:#3b404b;transform:scaleX(0.918);">Video</span>
<span class="t" style="left:208.0px;top:38.6px;font-size:11.2px;color:#3b404b;transform:scaleX(0.928);">Video Folder</span>
<span class="t" style="left:332.2px;top:38.6px;font-size:11.2px;color:#3b404b;transform:scaleX(0.876);">Music</span>
<span class="t" style="left:417.0px;top:38.6px;font-size:11.2px;color:#3b404b;transform:scaleX(0.886);">Clear</span>
<span class="t" style="left:634.5px;top:44.0px;font-size:8.5px;color:#3c4660;transform:scaleX(0.978);text-decoration:underline;">Member-only Offer &gt;</span>
<span class="t" style="left:100.8px;top:83.9px;font-size:8.7px;color:#2c303a;font-weight:bold;transform:scaleX(1.064);">Ketut.Subiy...40x2160.mp4</span>
<span class="t" style="left:94.7px;top:98.7px;font-size:8px;color:#333842;transform:scaleX(0.922);">Video1: h264, 3840x2160, 00:00:15</span>
<span class="t" style="left:94.7px;top:111.7px;font-size:8px;color:#a6a9af;transform:scaleX(0.872);">No Audio</span>
<span class="t" style="left:94.7px;top:123.7px;font-size:8px;color:#333842;transform:scaleX(0.881);">No Subtitle</span>
<span class="t" style="left:234.6px;top:98.0px;font-size:7.5px;color:#333842;font-weight:bold;transform:scaleX(0.767);">1</span>
<span class="t" style="left:269.7px;top:83.9px;font-size:8.7px;color:#2c303a;font-weight:bold;transform:scaleX(1.062);">Ketut.Subiyanto.3840x2160</span>
<span class="t" style="left:282.5px;top:110.7px;font-size:8px;color:#2f343e;transform:scaleX(0.756);">JPEG</span>
<span class="t" style="left:353.3px;top:110.7px;font-size:8px;color:#2f343e;transform:scaleX(0.876);">1920x1080</span>
<span class="t" style="left:425.3px;top:110.7px;font-size:8px;color:#2f343e;transform:scaleX(0.935);">00:00:0...</span>
<span class="t" style="left:470.0px;top:120.0px;font-size:8.5px;color:#444a55;transform:scaleX(0.954);">Option</span>
<span class="t" style="left:81.5px;top:143.8px;font-size:8.7px;color:#abafb5;transform:scaleX(0.988);">Effect</span>
<span class="t" style="left:147.3px;top:143.8px;font-size:8.7px;color:#abafb5;transform:scaleX(0.942);">Watermark</span>
<span class="t" style="left:230.3px;top:143.8px;font-size:8.7px;color:#abafb5;transform:scaleX(0.909);">Cut</span>
<span class="t" style="left:286.7px;top:143.8px;font-size:8.7px;color:#abafb5;transform:scaleX(0.838);">Crop</span>
<span class="t" style="left:346.7px;top:143.8px;font-size:8.7px;color:#abafb5;transform:scaleX(0.937);">Rotate</span>
<span class="t" style="left:415.0px;top:143.8px;font-size:8.7px;color:#abafb5;transform:scaleX(0.942);">Subtitle</span>
<span class="t" style="left:100.8px;top:178.8px;font-size:8.7px;color:#fff;font-weight:bold;transform:scaleX(1.063);">polina.tank...80x1920.mov</span>
<span class="t" style="left:94.7px;top:194.7px;font-size:8px;color:#fff;transform:scaleX(0.920);">Video1: h264, 1080x1920, 00:00:04</span>
<span class="t" style="left:94.7px;top:206.7px;font-size:8px;color:#fff;transform:scaleX(0.857);">Audio Disabled</span>
<span class="t" style="left:94.7px;top:219.7px;font-size:8px;color:#fff;transform:scaleX(0.881);">No Subtitle</span>
<span class="t" style="left:234.6px;top:192.9px;font-size:7.5px;color:#333842;font-weight:bold;transform:scaleX(0.767);">1</span>
<span class="t" style="left:234.6px;top:205.9px;font-size:7.5px;color:#333842;font-weight:bold;transform:scaleX(0.767);">1</span>
<span class="t" style="left:269.7px;top:178.8px;font-size:8.7px;color:#fff;font-weight:bold;transform:scaleX(1.062);">polina.tankilevitch.5385812.1080x1920</span>
<span class="t" style="left:282.5px;top:205.7px;font-size:8px;color:#fff;transform:scaleX(0.756);">JPEG</span>
<span class="t" style="left:353.3px;top:205.7px;font-size:8px;color:#fff;transform:scaleX(0.876);">1920x1080</span>
<span class="t" style="left:425.3px;top:205.7px;font-size:8px;color:#fff;transform:scaleX(0.935);">00:00:0...</span>
<span class="t" style="left:470.0px;top:215.9px;font-size:8.5px;color:#fff;transform:scaleX(0.954);">Option</span>
<span class="t" style="left:81.5px;top:238.8px;font-size:8.7px;color:#86c3f2;transform:scaleX(0.988);">Effect</span>
<span class="t" style="left:147.3px;top:238.8px;font-size:8.7px;color:#86c3f2;transform:scaleX(0.942);">Watermark</span>
<span class="t" style="left:230.3px;top:238.8px;font-size:8.7px;color:#86c3f2;transform:scaleX(0.909);">Cut</span>
<span class="t" style="left:286.7px;top:238.8px;font-size:8.7px;color:#86c3f2;transform:scaleX(0.838);">Crop</span>
<span class="t" style="left:346.7px;top:238.8px;font-size:8.7px;color:#86c3f2;transform:scaleX(0.937);">Rotate</span>
<span class="t" style="left:415.0px;top:238.8px;font-size:8.7px;color:#86c3f2;transform:scaleX(0.942);">Subtitle</span>
<span class="t" style="left:540.7px;top:252.8px;font-size:8.7px;color:#2f3440;font-weight:bold;transform:scaleX(0.892);">Hardware Acceleration Engine:</span>
<span class="t" style="left:580.7px;top:270.6px;font-size:8.2px;color:#3a3f4a;transform:scaleX(0.890);">Nvidia / Intel / AMD</span>
<span class="t" style="left:673.3px;top:270.9px;font-size:8.5px;color:#2f3440;font-weight:bold;transform:scaleX(0.894);">Option</span>
<span class="t" style="left:539.9px;top:296.6px;font-size:8.2px;color:#3a3f4a;transform:scaleX(0.852);">Use High Quality Engine</span>
<span class="t" style="left:667.0px;top:296.6px;font-size:8.2px;color:#3a3f4a;transform:scaleX(0.862);">Deinterlacing</span>
<span class="t" style="left:539.9px;top:317.6px;font-size:8.2px;color:#b4b7bc;transform:scaleX(0.844);">Merge</span>
<span class="t" style="left:667.0px;top:317.6px;font-size:8.2px;color:#3a3f4a;transform:scaleX(0.881);">Auto Copy</span>
<span class="t" style="left:704.0px;top:315.9px;font-size:9.5px;color:#3a3f4a;font-weight:bold;transform:scaleX(0.688);">?</span>
<span class="t" style="left:525.7px;top:343.8px;font-size:8.7px;color:#2f3440;font-weight:bold;transform:scaleX(0.890);">Output Folder:</span>
<span class="t" style="left:525.7px;top:357.7px;font-size:8px;color:#6a6e76;transform:scaleX(0.893);">C:\Users\PC\Desktop</span>
<span class="t" style="left:651.5px;top:344.7px;font-size:8px;color:#3a3f4a;transform:scaleX(0.866);">Browse</span>
<span class="t" style="left:686.3px;top:344.7px;font-size:8px;color:#3a3f4a;transform:scaleX(0.894);">Open</span>
<span class="t" style="left:12.0px;top:422.9px;font-size:8.5px;color:#2f3440;font-weight:bold;transform:scaleX(0.968);">Target Format</span>
<span class="t" style="left:116.7px;top:420.8px;font-size:7.8px;color:#3a3f4a;transform:scaleX(0.923);">Split</span>
<span class="t" style="left:160.4px;top:420.8px;font-size:7.8px;color:#3a3f4a;transform:scaleX(0.948);">Rotate</span>
<span class="t" style="left:207.3px;top:413.8px;font-size:7.8px;color:#3a3f4a;transform:scaleX(0.937);">Mirror &amp;</span>
<span class="t" style="left:214.4px;top:421.8px;font-size:7.8px;color:#3a3f4a;transform:scaleX(0.890);">Flip</span>
<span class="t" style="left:262.2px;top:420.8px;font-size:7.8px;color:#3a3f4a;transform:scaleX(0.977);">GIF</span>
<span class="t" style="left:300.0px;top:420.8px;font-size:7.8px;color:#3a3f4a;transform:scaleX(0.889);">Compress</span>
<span class="t" style="left:354.9px;top:420.8px;font-size:7.8px;color:#3a3f4a;transform:scaleX(0.884);">M3U8</span>
<span class="t" style="left:448.0px;top:420.8px;font-size:7.8px;color:#3a3f4a;transform:scaleX(0.887);">3D→2D</span>
<span class="t" style="left:491.6px;top:420.8px;font-size:7.8px;color:#3a3f4a;transform:scaleX(0.835);">MKVMaker</span>
<span class="t" style="left:544.0px;top:420.8px;font-size:7.8px;color:#3a3f4a;transform:scaleX(0.893);">Fisheye</span>
<span class="t" style="left:389.9px;top:423.9px;font-size:10.5px;color:#3a3f4a;transform:scaleX(0.901);">Snapshot</span>
<span class="t" style="left:179.6px;top:449.9px;font-size:8.5px;color:#3a3f4a;transform:scaleX(0.972);">Popular</span>
<span class="t" style="left:250.8px;top:449.9px;font-size:8.5px;color:#3a3f4a;transform:scaleX(1.005);">Video</span>
<span class="t" style="left:316.5px;top:449.9px;font-size:8.5px;color:#3a3f4a;transform:scaleX(0.947);">Device</span>
<span class="t" style="left:385.8px;top:449.9px;font-size:8.5px;color:#3a3f4a;transform:scaleX(0.982);">Music</span>
<span class="t" style="left:448.8px;top:449.9px;font-size:8.5px;color:#3a3f4a;transform:scaleX(1.047);">Toolbox</span>
<span class="t" style="left:669.1px;top:427.1px;font-size:13.3px;color:#fff;font-weight:bold;transform:scaleX(0.976);letter-spacing:0.5px;">RUN</span>
</body></html>
